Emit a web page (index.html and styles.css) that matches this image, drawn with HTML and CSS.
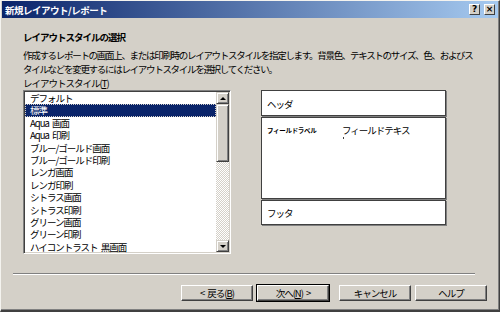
FILE: index.html
```html
<!DOCTYPE html>
<html lang="ja">
<head>
    <meta charset="UTF-8">
    <title>新規レイアウト/レポート</title>
    <link rel="stylesheet" href="styles.css">
</head>
<body>
    <div class="window">
        <div class="titlebar">
            <span class="title">新規レイアウト/レポート</span>
            <div class="caption-buttons">
                <span class="cap-btn">?</span>
                <span class="cap-btn cap-close">×</span>
            </div>
        </div>

        <div class="content">
            <h1>レイアウトスタイルの選択</h1>
            <p class="desc">作成するレポートの画面上、または印刷時のレイアウトスタイルを指定します。背景色、テキストのサイズ、色、およびス<br>タイルなどを変更するにはレイアウトスタイルを選択してください。</p>
            <div class="label">レイアウトスタイル(<u>T</u>)</div>

            <div class="main">
                <div class="listbox">
                    <ul class="items">
                        <li>デフォルト</li>
                        <li class="selected">標準</li>
                        <li>Aqua 画面</li>
                        <li>Aqua 印刷</li>
                        <li>ブルー/ゴールド画面</li>
                        <li>ブルー/ゴールド印刷</li>
                        <li>レンガ画面</li>
                        <li>レンガ印刷</li>
                        <li>シトラス画面</li>
                        <li>シトラス印刷</li>
                        <li>グリーン画面</li>
                        <li>グリーン印刷</li>
                        <li>ハイコントラスト 黒画面</li>
                    </ul>
                    <div class="scrollbar">
                        <div class="sb-btn"><span class="arrow-up"></span></div>
                        <div class="sb-thumb"></div>
                        <div class="sb-track"></div>
                        <div class="sb-btn"><span class="arrow-down"></span></div>
                    </div>
                </div>

                <div class="preview">
                    <div class="pv-box pv-header">ヘッダ</div>
                    <div class="pv-box pv-body">
                        <span class="pv-label">フィールドラベル</span>
                        <div class="pv-field">
                            <span>フィールドテキス</span>
                            <span class="pv-tick"></span>
                        </div>
                    </div>
                    <div class="pv-box pv-footer">フッタ</div>
                </div>
            </div>

            <div class="separator"></div>

            <div class="buttons">
                <button>&lt; 戻る(<u>B</u>)</button>
                <button class="default">次へ(<u>N</u>) &gt;</button>
                <button class="gap">キャンセル</button>
                <button>ヘルプ</button>
            </div>
        </div>
    </div>
</body>
</html>
```

FILE: styles.css
```css
body {
    margin: 0;
    background: #d4d0c8;
    font-family: "Noto Sans CJK JP", sans-serif;
    font-size: 9.5px;
    letter-spacing: -1px;
    word-spacing: 2px;
    color: #000;
}
.window {
    width: 500px;
    height: 312px;
    box-sizing: border-box;
    overflow: hidden;
    border-top: 1px solid #f4f3ef;
    border-left: 1px solid #f4f3ef;
    border-right: 1px solid #404040;
    border-bottom: 2px solid #404040;
    box-shadow: inset -1px -1px 0 #808080;
    background: #d4d0c8;
}
.titlebar {
    height: 17px;
    margin: 0 1px;
    padding: 0 3px;
    display: flex;
    align-items: center;
    justify-content: space-between;
    background: linear-gradient(to right, #0a246a, #a6caf0);
}
.title {
    color: #fff;
    font-weight: bold;
    letter-spacing: -0.5px;
}
.caption-buttons {
    display: flex;
    gap: 4px;
}
.cap-btn {
    width: 11px;
    height: 11px;
    box-sizing: border-box;
    background: #d4d0c8;
    border: 1px solid;
    border-color: #fff #404040 #404040 #fff;
    font-size: 9px;
    font-weight: bold;
    letter-spacing: 0;
    line-height: 9px;
    text-align: center;
    font-family: "DejaVu Sans", sans-serif;
}
.content {
    padding: 12px 12px 0 22px;
}
h1 {
    margin: 0 0 4px;
    font-size: 9.5px;
    line-height: 14px;
    font-weight: bold;
}
.desc {
    margin: 0;
    line-height: 14px;
    white-space: nowrap;
    letter-spacing: -1.3px;
}
.label {
    line-height: 14px;
}
.main {
    display: flex;
    gap: 30px;
}
.listbox {
    width: 208px;
    height: 164px;
    box-sizing: border-box;
    display: flex;
    background: #fff;
    border: 1px solid;
    border-color: #808080 #fff #fff #808080;
    box-shadow: inset 1px 1px 0 #404040, inset -1px -1px 0 #d4d0c8;
    padding: 1px;
}
.items {
    flex: 1;
    margin: 0;
    padding: 0;
    list-style: none;
}
.items li {
    height: 12.4px;
    line-height: 12.4px;
    padding-left: 5px;
    white-space: pre;
}
.items li.selected {
    background: #0a246a;
    color: #fff;
    outline: 1px dotted #d4d0c8;
    outline-offset: -1px;
}
.scrollbar {
    width: 13px;
    display: flex;
    flex-direction: column;
}
.sb-btn, .sb-thumb {
    box-sizing: border-box;
    background: #d4d0c8;
    border: 1px solid;
    border-color: #d4d0c8 #404040 #404040 #d4d0c8;
    box-shadow: inset 1px 1px 0 #fff, inset -1px -1px 0 #808080;
}
.sb-btn {
    height: 12px;
    display: flex;
    align-items: center;
    justify-content: center;
}
.sb-thumb {
    height: 58px;
}
.sb-track {
    flex: 1;
    background-color: #ece9e2;
    background-image: repeating-conic-gradient(#d4d0c8 0 25%, #fff 0 50%);
    background-size: 2px 2px;
}
.arrow-up, .arrow-down {
    width: 0;
    height: 0;
    border-left: 3px solid transparent;
    border-right: 3px solid transparent;
}
.arrow-up {
    border-bottom: 3px solid #000;
}
.arrow-down {
    border-top: 3px solid #000;
}
.preview {
    width: 185px;
    display: flex;
    flex-direction: column;
    gap: 1px;
}
.pv-box {
    box-sizing: border-box;
    background: #fff;
    border: 1px solid #404040;
    box-shadow: 1px 1px 0 #808080;
    padding-left: 5px;
}
.pv-header {
    height: 26px;
    line-height: 26px;
}
.pv-body {
    height: 82px;
    display: flex;
    padding-top: 6px;
}
.pv-label {
    width: 75px;
    font-size: 6.5px;
    font-weight: bold;
    letter-spacing: -0.3px;
    line-height: 12px;
}
.pv-field {
    display: flex;
    flex-direction: column;
    line-height: 12px;
}
.pv-tick {
    width: 1px;
    height: 2px;
    margin: 1px 0 0 1px;
    background: #404040;
}
.pv-footer {
    height: 25px;
    line-height: 25px;
}
.separator {
    margin: 19px 12px 0 -10px;
    height: 0;
    border-top: 1px solid #808080;
    border-bottom: 1px solid #fff;
}
.buttons {
    display: flex;
    justify-content: flex-end;
    gap: 4px;
    margin-top: 10px;
}
button {
    width: 72px;
    height: 16px;
    padding: 0;
    font-family: inherit;
    font-size: inherit;
    letter-spacing: inherit;
    word-spacing: inherit;
    line-height: 12px;
    background: #d4d0c8;
    border: 1px solid;
    border-color: #fff #404040 #404040 #fff;
    box-shadow: inset -1px -1px 0 #808080;
    color: #000;
}
button.default {
    outline: 1px solid #000;
}
button.gap {
    margin-left: 6px;
}
```
